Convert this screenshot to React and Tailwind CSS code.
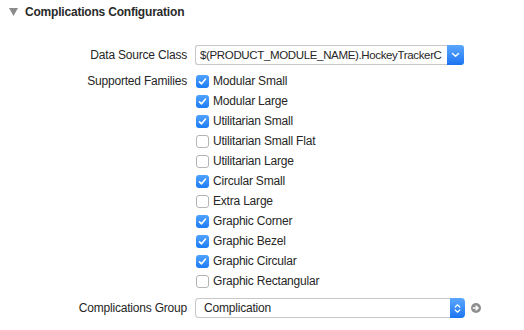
import React from 'react';

const families = [
  { name: 'Modular Small', checked: true },
  { name: 'Modular Large', checked: true },
  { name: 'Utilitarian Small', checked: true },
  { name: 'Utilitarian Small Flat', checked: false },
  { name: 'Utilitarian Large', checked: false },
  { name: 'Circular Small', checked: true },
  { name: 'Extra Large', checked: false },
  { name: 'Graphic Corner', checked: true },
  { name: 'Graphic Bezel', checked: true },
  { name: 'Graphic Circular', checked: true },
  { name: 'Graphic Rectangular', checked: false },
];

const Checkbox = ({ checked }) =>
  checked ? (
    <span className="w-[13px] h-[13px] rounded-[3px] bg-gradient-to-b from-[#4fa2ff] to-[#1a7cf5] flex items-center justify-center shrink-0">
      <svg width="9" height="9" viewBox="0 0 9 9">
        <path d="M1.5 4.8 L3.6 6.8 L7.5 2" stroke="white" strokeWidth="1.6" fill="none" strokeLinecap="round" strokeLinejoin="round" />
      </svg>
    </span>
  ) : (
    <span className="w-[13px] h-[13px] rounded-[3px] bg-white border border-[#b4b4b4] shrink-0" />
  );

const App = () => {
  return (
    <div
      className="w-[524px] h-[330px] bg-white text-[#262626] overflow-hidden"
      style={{ fontFamily: '"Liberation Sans", Arial, sans-serif' }}
    >
      {/* header */}
      <div className="flex items-center h-[22px] pl-[9px] pt-[1px]">
        <svg width="9" height="8" viewBox="0 0 9 8" className="mr-[7px]">
          <path d="M0 0 L9 0 L4.5 8 Z" fill="#8c8c8c" />
        </svg>
        <span className="text-[12px] font-bold tracking-[-0.2px] text-[#2a2a2a]">Complications Configuration</span>
      </div>

      <div className="grid grid-cols-[187px_1fr] gap-x-[8px] mt-[23px] text-[12px] tracking-[-0.2px]">
        <div className="text-right h-[20px] leading-[20px]">Data Source Class</div>
        <div className="flex h-[20px] w-[269px]">
          <div className="flex-1 border border-[#c8c8c8] border-r-0 rounded-l-[3px] bg-white pl-[4px] leading-[18px] overflow-hidden whitespace-nowrap text-[11.5px] tracking-[-0.35px]">
            $(PRODUCT_MODULE_NAME).HockeyTrackerC
          </div>
          <div className="w-[17px] h-[20px] rounded-r-[3px] bg-gradient-to-b from-[#5aa7ff] to-[#1a74f2] flex items-center justify-center">
            <svg width="9" height="6" viewBox="0 0 9 6">
              <path d="M1.5 1.5 L4.5 4.3 L7.5 1.5" stroke="white" strokeWidth="1.4" fill="none" strokeLinecap="round" strokeLinejoin="round" />
            </svg>
          </div>
        </div>

        <div className="text-right h-[20px] leading-[20px] mt-[6px]">Supported Families</div>
        <div className="flex flex-col mt-[6px]">
          {families.map((f) => (
            <div key={f.name} className="flex items-center h-[20px] pl-[1px] gap-[4px]">
              <Checkbox checked={f.checked} />
              <span>{f.name}</span>
            </div>
          ))}
        </div>

        <div className="text-right h-[20px] leading-[20px] mt-[7px]">Complications Group</div>
        <div className="flex items-center mt-[7px]">
          <div className="flex h-[20px] w-[270px]">
            <div className="flex-1 border border-[#c8c8c8] border-r-0 rounded-l-[4px] bg-white pl-[8px] leading-[18px]">
              Complication
            </div>
            <div className="w-[15px] h-[20px] rounded-r-[4px] bg-gradient-to-b from-[#5aa7ff] to-[#1a74f2] flex items-center justify-center">
              <svg width="7" height="11" viewBox="0 0 7 11">
                <path d="M1.2 4 L3.5 1.8 L5.8 4 M1.2 7 L3.5 9.2 L5.8 7" stroke="white" strokeWidth="1.2" fill="none" strokeLinecap="round" strokeLinejoin="round" />
              </svg>
            </div>
          </div>
          <svg width="10" height="10" viewBox="0 0 10 10" className="ml-[6px]">
            <circle cx="5" cy="5" r="5" fill="#8e8e8e" />
            <path d="M2.3 5 H7 M5 3 L7.2 5 L5 7" stroke="white" strokeWidth="1.3" fill="none" strokeLinecap="round" strokeLinejoin="round" />
          </svg>
        </div>
      </div>
    </div>
  );
};

export default App;
